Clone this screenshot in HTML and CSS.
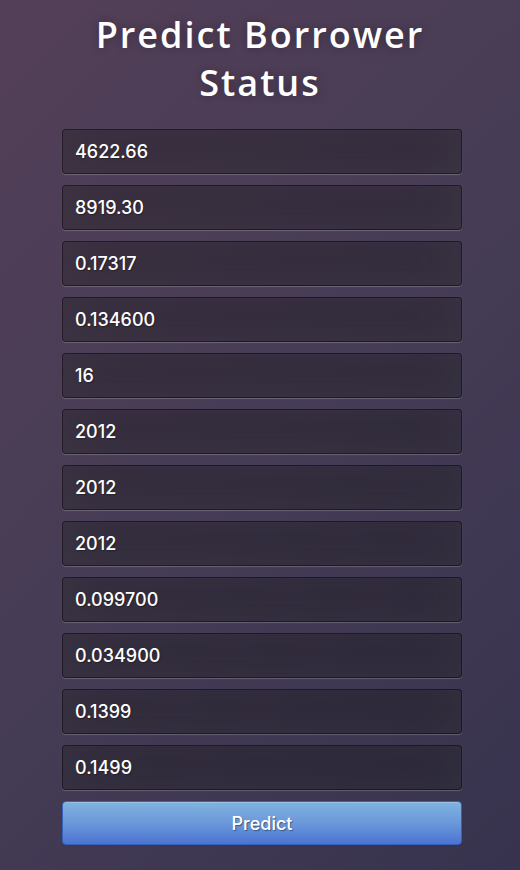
FILE: index.html
```html
<!DOCTYPE html>
<html>
<head>
<meta charset="utf-8">
<link rel="stylesheet" href="styles.css">
</head>
<body>
<div class="login">
  <h1 class="title">Predict Borrower Status</h1>
  <form class="form">
    <input class="field" type="text" value="4622.66">
    <input class="field" type="text" value="8919.30">
    <input class="field" type="text" value="0.17317">
    <input class="field" type="text" value="0.134600">
    <input class="field" type="text" value="16">
    <input class="field" type="text" value="2012">
    <input class="field" type="text" value="2012">
    <input class="field" type="text" value="2012">
    <input class="field" type="text" value="0.099700">
    <input class="field" type="text" value="0.034900">
    <input class="field" type="text" value="0.1399">
    <input class="field" type="text" value="0.1499">
    <button class="btn" type="button">Predict</button>
  </form>
</div>
</body>
</html>
```
FILE: styles.css
```css
html, body {
  margin: 0;
  padding: 0;
  width: 100%;
  height: 100%;
}
body {
  background: linear-gradient(135deg, #543f58 0%, #463c55 50%, #37334e 100%);
  font-family: "Open Sans", sans-serif;
  overflow: hidden;
}
.login {
  width: 400px;
  margin-left: 62px;
  padding-top: 11px;
}
.title {
  margin: 0 0 22px 18px;
  width: 360px;
  text-align: center;
  color: #fff;
  font-family: "Open Sans", sans-serif;
  font-weight: 600;
  font-size: 36px;
  line-height: 48px;
  letter-spacing: 2px;
  text-shadow: 0 0 10px rgba(0,0,0,0.3);
}
.form {
  display: flex;
  flex-direction: column;
}
.field {
  box-sizing: border-box;
  width: 400px;
  height: 45px;
  margin: 0 0 11px 0;
  padding: 0 12px;
  background: rgba(0,0,0,0.3);
  border: 1px solid rgba(0,0,0,0.35);
  border-radius: 4px;
  outline: none;
  color: #fff;
  font-family: Inter, "Liberation Sans", sans-serif;
  font-size: 18px;
  font-weight: 500;
  text-shadow: 1px 1px 1px rgba(0,0,0,0.3);
  box-shadow: inset 0 -5px 45px rgba(100,100,100,0.2), 0 1px 1px rgba(255,255,255,0.2);
}
.btn {
  box-sizing: border-box;
  width: 400px;
  height: 44px;
  margin: 0;
  padding: 0;
  border: 1px solid #3762bc;
  border-radius: 4px;
  background: linear-gradient(to bottom, #80b3e0 0%, #6b98da 50%, #4b74d2 100%);
  color: #fff;
  font-family: Inter, "Liberation Sans", sans-serif;
  font-size: 18px;
  font-weight: 500;
  text-shadow: 1px 1px 1px rgba(0,0,0,0.4);
  box-shadow: inset 0 1px 0 rgba(255,255,255,0.2), 0 1px 2px rgba(0,0,0,0.05);
  cursor: pointer;
}
```
